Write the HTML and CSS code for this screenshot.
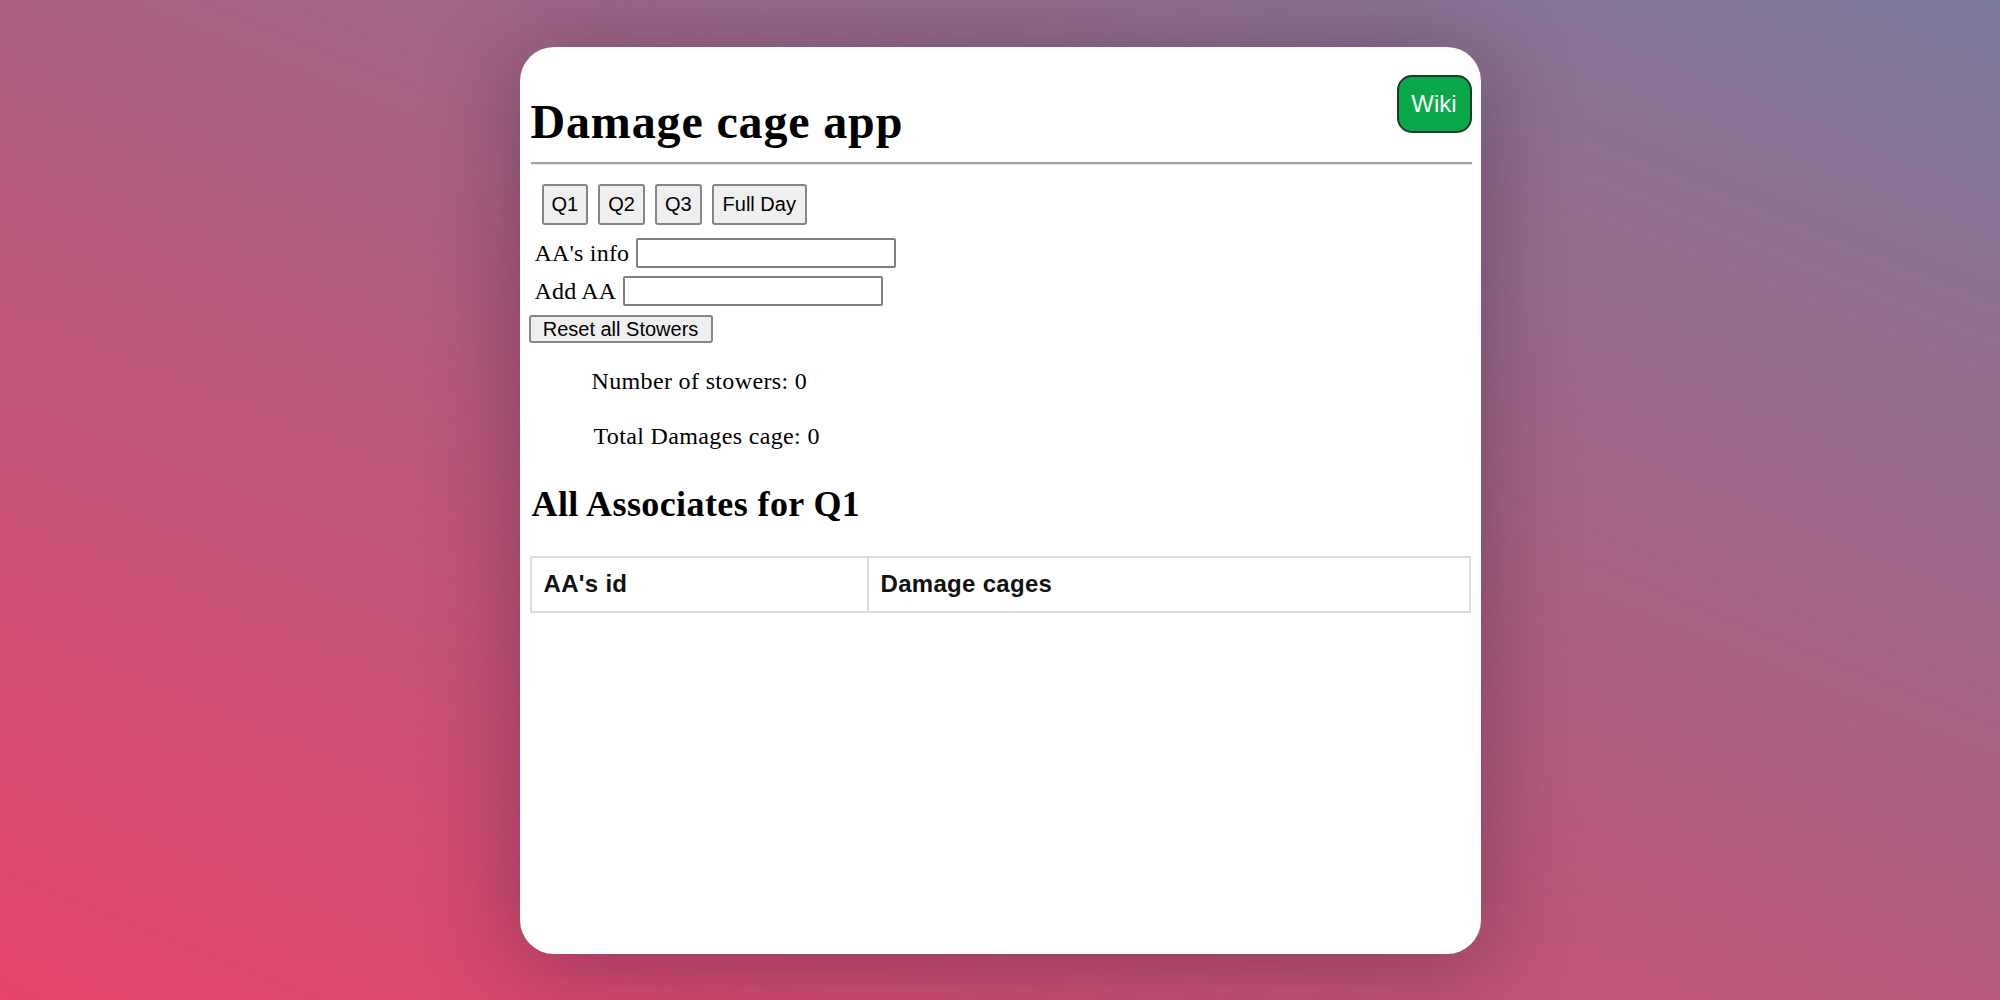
FILE: index.html
```html
<!DOCTYPE html>
<html lang="en">
<head>
<meta charset="utf-8">
<title>Damage cage app</title>
<link rel="stylesheet" href="styles.css">
</head>
<body>
<div class="stage">
  <main class="card">
    <header class="top">
      <h1 class="title">Damage cage app</h1>
      <a class="wiki" href="#">Wiki</a>
    </header>
    <hr class="rule">
    <div class="shifts">
      <button class="btn shift">Q1</button>
      <button class="btn shift">Q2</button>
      <button class="btn shift">Q3</button>
      <button class="btn shift shift-wide">Full Day</button>
    </div>
    <div class="field field-first">
      <label class="label">AA's info</label>
      <input class="input" type="text">
    </div>
    <div class="field">
      <label class="label">Add AA</label>
      <input class="input" type="text">
    </div>
    <button class="btn reset">Reset all Stowers</button>
    <div class="stats">
      <p class="stat">Number of stowers: 0</p>
      <p class="stat stat-total">Total Damages cage: 0</p>
    </div>
    <h2 class="subtitle">All Associates for Q1</h2>
    <table class="grid">
      <thead>
        <tr>
          <th class="col-id">AA's id</th>
          <th>Damage cages</th>
        </tr>
      </thead>
    </table>
  </main>
</div>
</body>
</html>
```

FILE: styles.css
```css
html, body {
  margin: 0;
  padding: 0;
}

body {
  width: 2000px;
  height: 1000px;
  overflow: hidden;
  background: linear-gradient(22deg, #e6446a 0%, #b65a7d 45%, #7c7a9a 100%);
  font-family: "Liberation Serif", "Times New Roman", serif;
  color: #000;
}

.stage {
  height: 1000px;
  display: flex;
  align-items: center;
  justify-content: center;
}

.card {
  width: 961px;
  height: 907px;
  box-sizing: border-box;
  padding: 30px 9px 0 11px;
  background: #fff;
  border-radius: 34px;
  box-shadow: 0 10px 90px rgba(40, 20, 45, 0.38);
  overflow: hidden;
}

.top {
  display: flex;
  justify-content: space-between;
  align-items: flex-start;
}

.title {
  margin: 21px 0 0 0;
  font-size: 48px;
  line-height: 48px;
  font-weight: bold;
  letter-spacing: 0.85px;
}

.wiki {
  width: 75px;
  height: 58px;
  box-sizing: border-box;
  display: flex;
  align-items: center;
  justify-content: center;
  background: #0aa84a;
  border: 2px solid #1f3a28;
  border-radius: 15px;
  color: #f4fff8;
  text-decoration: none;
  font-family: "Liberation Sans", Arial, sans-serif;
  font-size: 24px;
  margin-top: -2px;
  margin-right: 0;
}

.rule {
  margin: 16px 0 0 0;
  height: 0;
  border: 0;
  border-top: 2px solid #a3a3a3;
  border-bottom: 1px solid #e6e6e6;
}

.btn {
  font-family: "Liberation Sans", Arial, sans-serif;
  font-size: 20px;
  color: #000;
  background: #efefef;
  border: 2px solid #858585;
  border-radius: 3px;
  box-sizing: border-box;
  margin: 0;
}

.shifts {
  display: flex;
  gap: 10px;
  margin-top: 19px;
  padding-left: 11px;
}

.shift {
  height: 41px;
  padding: 0 8px;
}

.shift-wide {
  padding: 0 9px;
}

.field {
  display: flex;
  align-items: center;
  gap: 7px;
  margin-top: 8px;
  padding-left: 4px;
  height: 30px;
}

.field-first {
  margin-top: 13px;
}

.label {
  font-size: 24px;
  line-height: 30px;
  letter-spacing: 0.2px;
}

.input {
  width: 260px;
  height: 30px;
  box-sizing: border-box;
  border: 2px solid #808080;
  border-radius: 2px;
  background: #fff;
  margin: 0;
  padding: 0 4px;
}

.reset {
  display: block;
  margin-top: 9px;
  margin-left: -2px;
  height: 28px;
  width: 184px;
  padding: 0;
  line-height: 24px;
}

.stats {
  padding-left: 61px;
  margin-top: 23px;
  display: flex;
  flex-direction: column;
  gap: 25px;
}

.stat {
  margin: 0;
  font-size: 24px;
  line-height: 30px;
  letter-spacing: 0.35px;
}

.stat-total {
  padding-left: 2px;
}

.subtitle {
  margin: 33px 0 0 1px;
  font-size: 36px;
  line-height: 40px;
  font-weight: bold;
  letter-spacing: 0.4px;
}

.grid {
  margin-top: 32px;
  margin-left: -1px;
  width: 941px;
  border-collapse: collapse;
  border: 2px solid #dcdcdc;
  font-family: "Liberation Sans", Arial, sans-serif;
}

.grid th {
  border: 2px solid #dcdcdc;
  text-align: left;
  font-size: 24px;
  line-height: 28px;
  font-weight: bold;
  padding: 12px 12px 13px;
  color: #111;
  letter-spacing: 0.3px;
}

.grid .col-id {
  width: 311px;
}
```
